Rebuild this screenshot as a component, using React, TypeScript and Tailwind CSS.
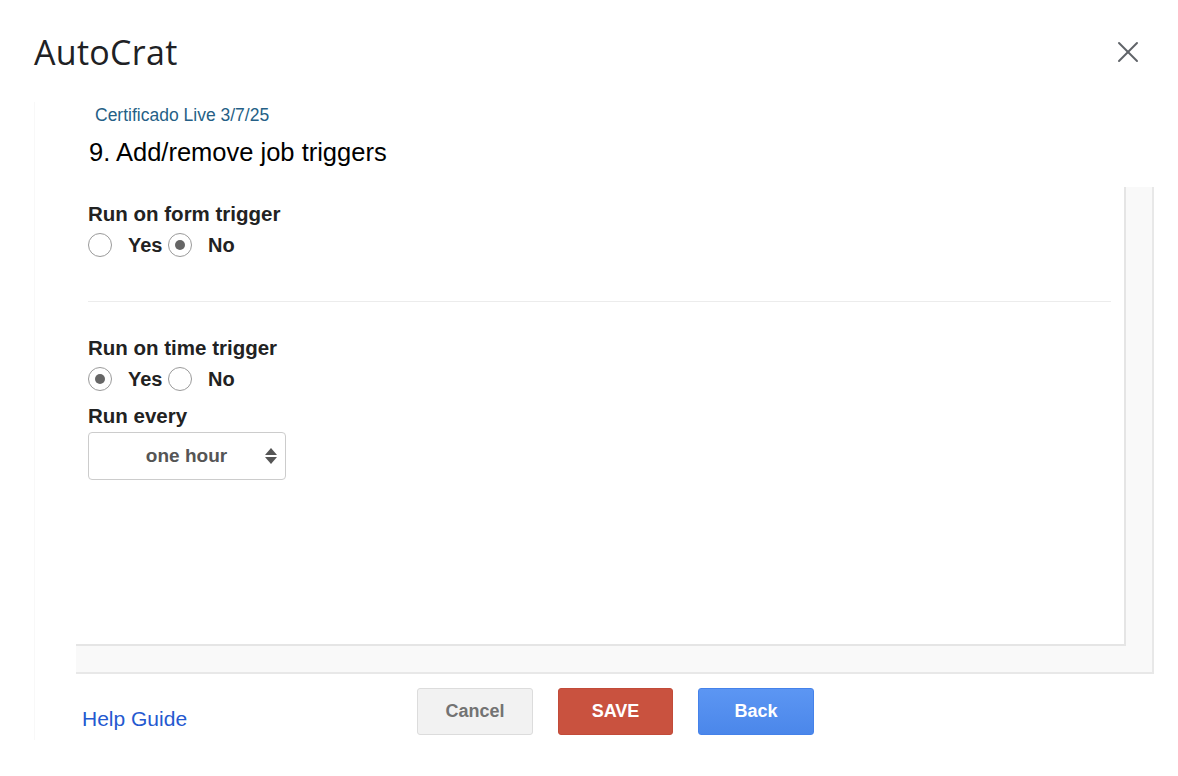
import { X } from 'lucide-react'

function Radio({ checked }: { checked: boolean }) {
  return (
    <span className="w-[24px] h-[24px] rounded-full border border-[#9a9a9a] bg-white flex items-center justify-center shrink-0">
      {checked && <span className="w-[10px] h-[10px] rounded-full bg-[#666]" />}
    </span>
  )
}

function YesNo({ value }: { value: 'yes' | 'no' }) {
  return (
    <div className="flex items-center h-[24px] mt-[8px]">
      <Radio checked={value === 'yes'} />
      <span className="ml-[16px] w-[40px] text-[20px] font-bold text-[#222]">Yes</span>
      <Radio checked={value === 'no'} />
      <span className="ml-[16px] text-[20px] font-bold text-[#222]">No</span>
    </div>
  )
}

export default function App() {
  return (
    <div className="w-[1178px] h-[776px] bg-white overflow-hidden" style={{ fontFamily: '"Liberation Sans", Arial, sans-serif' }}>
      {/* Header */}
      <div className="flex items-center justify-between h-[40px] mt-[32px] pl-[34px] pr-[32px]">
        <h1 className="text-[34px] leading-[40px] text-[#202124] tracking-[0.3px]" style={{ fontFamily: '"Open Sans", sans-serif' }}>
          AutoCrat
        </h1>
        <X size={36} strokeWidth={1.3} className="text-[#5f6368]" />
      </div>

      <div className="ml-[34px] mt-[30px] h-[638px] border-l border-[#f8f8f8]">
        <div className="pl-[60px] pt-[3px] text-[17.5px] leading-[20px] text-[#255f86]">Certificado Live 3/7/25</div>
        <div className="pl-[54px] mt-[13px] text-[25.5px] leading-[28px] text-black">9. Add/remove job triggers</div>

        {/* Scroll box */}
        <div className="ml-[41px] mt-[21px] w-[1078px] bg-[#f9f9f9] border-r-2 border-b-2 border-[#e8e8e8] pr-[26px] pb-[26px]">
          <div className="h-[459px] bg-white border-r-2 border-b-2 border-[#e5e5e5] pl-[12px] pr-[13px] pt-[16px]">
            <div className="text-[20.5px] leading-[22px] font-bold text-[#222]">Run on form trigger</div>
            <YesNo value="no" />
            <div className="mt-[44px] h-px bg-[#ececec]" />
            <div className="mt-[35px] text-[20.5px] leading-[22px] font-bold text-[#222]">Run on time trigger</div>
            <YesNo value="yes" />
            <div className="mt-[14px] text-[20.5px] leading-[22px] font-bold text-[#222]">Run every</div>
            <div className="mt-[5px] w-[198px] h-[48px] border border-[#cccccc] rounded-[4px] flex items-center bg-white">
              <span className="flex-1 text-center pl-[24px] text-[19px] font-bold text-[#555]">one hour</span>
              <svg width="14" height="22" viewBox="0 0 14 22" className="ml-[4px] mr-[7px]">
                <path d="M7 3 L13 10 L1 10 Z" fill="#555" />
                <path d="M1 12 L13 12 L7 19 Z" fill="#555" />
              </svg>
            </div>
          </div>
        </div>

        {/* Footer */}
        <div className="flex items-start mt-[14px]">
          <a className="ml-[47px] w-[335px] mt-[19px] text-[21px] leading-[24px] text-[#2559d0] shrink-0">Help Guide</a>
          <div className="flex gap-[25px]">
            <button className="w-[116px] h-[47px] rounded-[3px] bg-[#f2f2f2] border border-[#dcdcdc] text-[18px] font-bold text-[#737373]">Cancel</button>
            <button className="w-[115px] h-[47px] rounded-[3px] bg-[#c9523f] border border-[#c24b39] text-[18px] font-bold text-white">SAVE</button>
            <button className="w-[116px] h-[47px] rounded-[3px] bg-gradient-to-b from-[#5c96f3] to-[#4b87ea] border border-[#4582ea] text-[18px] font-bold text-white">Back</button>
          </div>
        </div>
      </div>
    </div>
  )
}
